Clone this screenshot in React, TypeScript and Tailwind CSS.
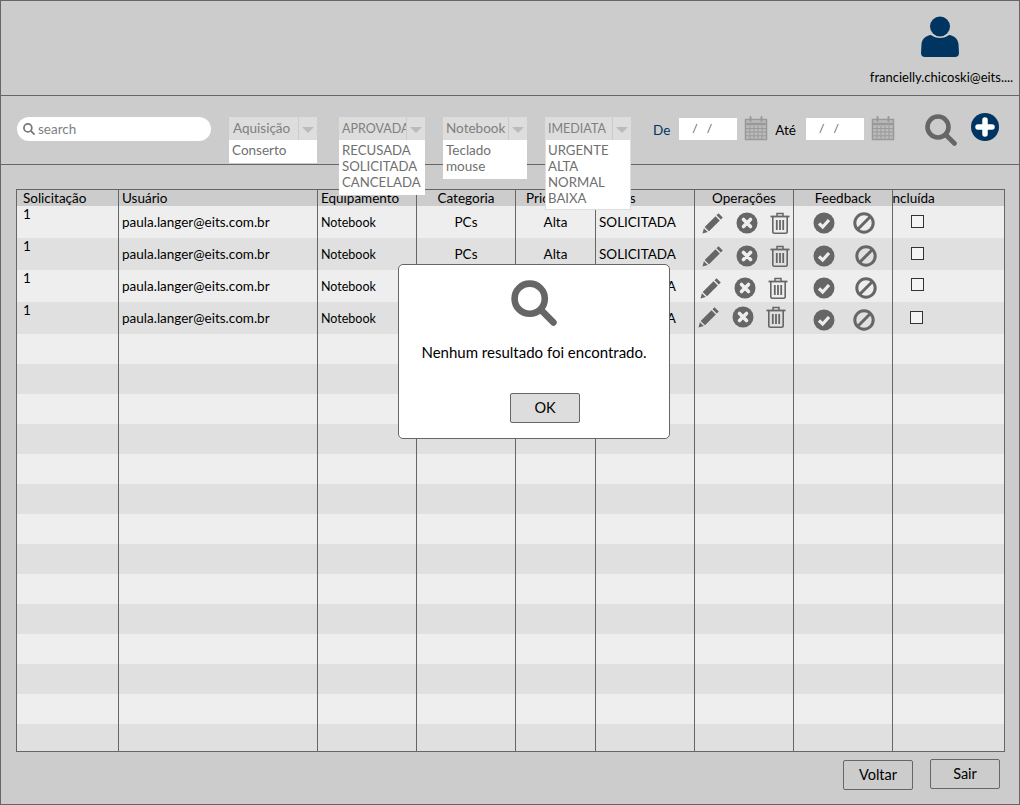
import React from 'react';

const FONT = "font-['Lato','Noto_Sans',sans-serif]";

const columns = [
    { label: 'Solicitação', width: 'w-[102px]', head: 'pl-[6px]' },
    { label: 'Usuário', width: 'w-[199px]', head: 'pl-[3px]' },
    { label: 'Equipamento', width: 'w-[99px]', head: 'pl-[3px]' },
    { label: 'Categoria', width: 'w-[99px]', head: 'justify-center' },
    { label: 'Prioridade', width: 'w-[80px]', head: 'pl-[10px]' },
    { label: 'Status', width: 'w-[99px]', head: 'pl-[3px]' },
    { label: 'Operações', width: 'w-[99px]', head: 'justify-center' },
    { label: 'Feedback', width: 'w-[99px]', head: 'justify-center' },
    { label: 'Concluída', width: 'w-[112px]', head: 'pl-0' },
];

// the hand-placed icons drift a little from row to row in the mockup
const rows = [
    { ops: 'ml-[7px] mt-[6px]', fb: 'ml-[19px] mt-[6px]', gap: 'gap-[18px]', box: 'ml-[18px] mt-[9px]' },
    { ops: 'ml-[7px] mt-[7px]', fb: 'ml-[19px] mt-[7px]', gap: 'gap-[20px]', box: 'ml-[18px] mt-[9px]' },
    { ops: 'ml-[5px] mt-[7px]', fb: 'ml-[19px] mt-[7px]', gap: 'gap-[20px]', box: 'ml-[18px] mt-[8px]' },
    { ops: 'ml-[3px] mt-[4px]', fb: 'ml-[19px] mt-[7px]', gap: 'gap-[18px]', box: 'ml-[17px] mt-[9px]' },
];

function UserIcon() {
    return (
        <svg width="38" height="42" viewBox="0 0 38 42" className="text-[#003561]" fill="currentColor">
            <circle cx="19" cy="10.500" r="10" />
            <path d="M10 19c2.500 2 5.500 3 9 3s6.500-1 9-3c5 .5 9 4 9.500 9l.5 9c0 2.500-1.500 4-4 4H4c-2.500 0-4-1.500-4-4l.5-9C1 23 5 19.500 10 19z" />
        </svg>
    );
}

function SearchIcon({ size, className }: { size: number; className?: string }) {
    return (
        <svg width={size} height={size} viewBox="0 0 32 32" className={className} fill="none" stroke="currentColor">
            <circle cx="13" cy="13" r="10.500" strokeWidth="4.600" />
            <path d="M21 21l8.500 8.500" strokeWidth="4.600" strokeLinecap="round" />
        </svg>
    );
}

function PlusIcon() {
    return (
        <svg width="28" height="28" viewBox="0 0 28 28">
            <circle cx="14" cy="14" r="14" fill="#003561" />
            <path d="M14 7v14M7 14h14" stroke="#fff" strokeWidth="5.500" strokeLinecap="round" />
        </svg>
    );
}

function CalendarIcon() {
    return (
        <svg width="24" height="25" viewBox="0 0 24 25" className="text-[#999]" fill="none" stroke="currentColor">
            <path d="M1.500 3.500h21v20h-21z" fill="#bbb" strokeWidth="1.500" />
            <path d="M1 8h22" strokeWidth="2.500" />
            <path d="M2 12.500h20M2 16h20M2 19.800h20M6 10v13M10 10v13M14 10v13M18 10v13" strokeWidth="1" />
            <path d="M6.500 1v4M17.500 1v4" strokeWidth="2" strokeLinecap="round" />
        </svg>
    );
}

function PencilIcon() {
    return (
        <svg width="22" height="22" viewBox="0 0 22 22" className="shrink-0 text-[#666]" fill="currentColor">
            <path d="M16.500 1.200l4.300 4.300-2 2-4.300-4.300zM13.500 4.200l4.300 4.300L7 19.300 2.700 15z" />
            <path d="M1.900 16.200l3.900 3.900L0.500 21.500z" />
        </svg>
    );
}

function CloseIcon() {
    return (
        <svg width="22" height="22" viewBox="0 0 22 22" className="shrink-0">
            <circle cx="11" cy="11" r="10.500" fill="#666" />
            <path d="M7.500 7.500l7 7M14.500 7.500l-7 7" stroke="#eee" strokeWidth="3.600" strokeLinecap="round" />
        </svg>
    );
}

function TrashIcon() {
    return (
        <svg width="20" height="22" viewBox="0 0 20 22" className="shrink-0 text-[#666]" fill="none" stroke="currentColor">
            <path d="M.5 4.500h19" strokeWidth="1.800" />
            <path d="M7 4V1.500h6V4" strokeWidth="1.500" />
            <path d="M2.800 5v14.500c0 1 .7 1.700 1.700 1.700h11c1 0 1.700-.7 1.700-1.700V5" strokeWidth="1.600" />
            <path d="M6.800 8v10M10 8v10M13.200 8v10" strokeWidth="1.800" />
        </svg>
    );
}

function CheckIcon() {
    return (
        <svg width="22" height="22" viewBox="0 0 22 22" className="shrink-0">
            <circle cx="11" cy="11" r="10.500" fill="#666" />
            <path d="M6 11.500l3.700 3.500L16 8" fill="none" stroke="#eee" strokeWidth="3.200" />
        </svg>
    );
}

function BanIcon() {
    return (
        <svg width="22" height="22" viewBox="0 0 22 22" className="shrink-0" fill="none" stroke="#666" strokeWidth="3">
            <circle cx="11" cy="11" r="9.200" />
            <path d="M5 17L17 5" />
        </svg>
    );
}

type SelectProps = {
    value: string;
    options: string[];
    width: string;
    labelWidth: string;
    listClass: string;
    valueClass?: string;
};

function Select({ value, options, width, labelWidth, listClass, valueClass = 'pl-[4px] text-[13.500px]' }: SelectProps) {
    return (
        <div className={`relative h-[23px] ${width}`}>
            <div className="flex h-[23px] bg-[#ddd]">
                <div className={`${labelWidth} overflow-hidden whitespace-nowrap leading-[22px] text-[#808080] ${valueClass}`}>{value}</div>
                <div className="flex flex-1 items-center justify-center border-l border-[#ccc]">
                    <div className="mt-[3px] h-0 w-0 border-x-[6px] border-t-[6px] border-x-transparent border-t-[#bbb]" />
                </div>
            </div>
            <div className={`absolute top-[23px] left-0 z-10 w-full bg-white pt-[2px] leading-[16px] text-[#707070] ${listClass}`}>
                {options.map((o) => <div key={o} className="whitespace-nowrap">{o}</div>)}
            </div>
        </div>
    );
}

function DateField() {
    return (
        <div className="flex h-[22px] w-[58px] items-center gap-[9px] bg-white pl-[13px] text-[12px] text-[#555]">
            <span>/</span><span>/</span>
        </div>
    );
}

function Row({ index }: { index: number }) {
    const row = rows[index];
    return (
        <>
            <div className="w-[102px] border-r border-[#666] pl-[6px] leading-[16px]">1</div>
            <div className="w-[199px] border-r border-[#666] pl-[3px] pt-[6px]">paula.langer@eits.com.br</div>
            <div className="w-[99px] border-r border-[#666] pl-[3px] pt-[7px] text-[12.500px] leading-[20px]">Notebook</div>
            <div className="w-[99px] border-r border-[#666] pt-[6px] text-center">PCs</div>
            <div className="w-[80px] border-r border-[#666] pt-[6px] text-center">Alta</div>
            <div className="w-[99px] border-r border-[#666] pl-[3px] pt-[6px]">SOLICITADA</div>
            <div className="w-[99px] border-r border-[#666]">
                <div className={`flex items-start gap-[12px] ${row.ops}`}>
                    <PencilIcon /><CloseIcon /><TrashIcon />
                </div>
            </div>
            <div className="w-[99px] border-r border-[#666]">
                <div className={`flex items-start ${row.fb} ${row.gap}`}>
                    <CheckIcon /><BanIcon />
                </div>
            </div>
            <div className="flex-1">
                <div className={`h-[13px] w-[13px] border border-[#333] bg-[#f4f4f4] ${row.box}`} />
            </div>
        </>
    );
}

export default function App() {
    const emptyRows = Array.from({ length: 14 }, (_, i) => i);

    return (
        <div className={`relative h-[805px] w-[1020px] overflow-hidden border border-[#666] bg-[#ccc] text-[13.500px] text-black ${FONT}`}>
            <header className="flex h-[95px] items-start justify-end border-b border-[#666]">
                <div className="mr-[8px] flex w-[143px] flex-col items-center pt-[15px]">
                    <UserIcon />
                    <div className="ml-[4px] mt-[11px] whitespace-nowrap text-[13px] leading-[16px]">francielly.chicoski@eits....</div>
                </div>
            </header>

            <div className="flex h-[69px] items-start border-b border-[#666] pt-[21px]">
                <div className="ml-[16px] flex h-[24px] w-[194px] items-center gap-[3px] rounded-full bg-white pl-[6px] text-[13.500px] text-[#808080]">
                    <SearchIcon size={12} className="text-[#777]" />
                    <span className="mt-[1px]">search</span>
                </div>
                <div className="ml-[18px]">
                    <Select value="Aquisição" options={['Conserto']} width="w-[88px]" labelWidth="w-[69px]" listClass="h-[23px] pl-[3px] text-[13.500px]" />
                </div>
                <div className="ml-[22px]">
                    <Select value="APROVADA" options={['RECUSADA', 'SOLICITADA', 'CANCELADA']} width="w-[86px]" labelWidth="w-[67px]" valueClass="pl-[3px] pt-[1px] text-[12.500px]" listClass="h-[55px] pl-[3px] text-[13.200px]" />
                </div>
                <div className="ml-[18px]">
                    <Select value="Notebook" options={['Teclado', 'mouse']} width="w-[84px]" labelWidth="w-[65px]" valueClass="pl-[3px] text-[13.500px]" listClass="h-[39px] pl-[3px] text-[13.500px]" />
                </div>
                <div className="ml-[18px]">
                    <Select value="IMEDIATA" options={['URGENTE', 'ALTA', 'NORMAL', 'BAIXA']} width="w-[86px]" labelWidth="w-[67px]" valueClass="pl-[3px] pt-[1px] text-[12.500px]" listClass="h-[70px] border-b border-x border-[#ddd] pl-[2px] text-[13.200px]" />
                </div>
                <div className="ml-[22px] mt-[3px] text-[#003561]">De</div>
                <div className="ml-[9px] mt-[1px]"><DateField /></div>
                <div className="ml-[7px] mt-[-1px]"><CalendarIcon /></div>
                <div className="ml-[7px] mt-[3px]">Até</div>
                <div className="ml-[10px] mt-[1px]"><DateField /></div>
                <div className="ml-[7px] mt-[-1px]"><CalendarIcon /></div>
                <div className="ml-[30px] mt-[-3px]"><SearchIcon size={32} className="text-[#666]" /></div>
                <div className="ml-[14px] mt-[-4px]"><PlusIcon /></div>
            </div>

            <div className="ml-[15px] mt-[24px] w-[989px] border border-[#666]">
                <div className="flex h-[16px] leading-[16px]">
                    {columns.map((c, i) => (
                        <div key={c.label} className={`flex overflow-hidden whitespace-nowrap ${c.width} ${c.head} ${i < 8 ? 'border-r border-[#666]' : 'flex-1'}`}>
                            {c.label === 'Concluída' ? <span className="ml-[-17px]">Concluída</span> : c.label}
                        </div>
                    ))}
                </div>
                {rows.map((_, i) => (
                    <div key={i} className={`flex h-[32px] ${i % 2 === 0 ? 'bg-[#eee]' : 'bg-[#e0e0e0]'}`}>
                        <Row index={i} />
                    </div>
                ))}
                {emptyRows.map((i) => (
                    <div key={i} className={`flex ${i === 13 ? 'h-[27px]' : 'h-[30px]'} ${i % 2 === 0 ? 'bg-[#eee]' : 'bg-[#e0e0e0]'}`}>
                        {columns.map((c, j) => (
                            <div key={c.label} className={`${c.width} ${j < 8 ? 'border-r border-[#666]' : 'flex-1'}`} />
                        ))}
                    </div>
                ))}
            </div>

            <div className="mr-[19px] flex items-start justify-end gap-[17px]">
                <button className="mt-[8px] h-[30px] w-[70px] rounded-[2px] border border-[#666] text-[14.500px]">Voltar</button>
                <button className="mt-[7px] h-[30px] w-[70px] rounded-[2px] border border-[#666] text-[14.500px]">Sair</button>
            </div>

            <div className="absolute top-[263px] left-[397px] z-20 flex h-[175px] w-[272px] flex-col items-center rounded-[5px] border border-[#666] bg-white">
                <SearchIcon size={46} className="mt-[15px] text-[#666]" />
                <div className="mt-[17px] text-[15px] leading-[18px]">Nenhum resultado foi encontrado.</div>
                <button className="ml-[22px] mt-[32px] h-[30px] w-[70px] rounded-[2px] border border-[#666] bg-[#ddd] text-[14.500px]">OK</button>
            </div>
        </div>
    );
}
